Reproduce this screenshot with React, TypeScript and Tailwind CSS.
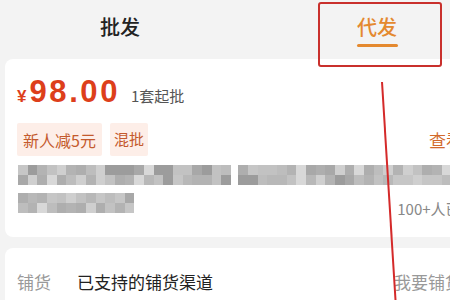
import React from "react";

const palette = [
  "bg-[#9c9c9c]",
  "bg-[#a8a8a8]",
  "bg-[#b3b3b3]",
  "bg-[#bdbdbd]",
  "bg-[#c6c6c6]",
  "bg-[#cfcfcf]",
  "bg-[#d8d8d8]",
  "bg-[#b8b8b8]",
  "bg-[#aeaeae]",
  "bg-[#c2c2c2]",
];

function rand(seed: number) {
  const x = Math.sin(seed * 12.9898 + 78.233) * 43758.5453;
  return x - Math.floor(x);
}

function Mosaic({ blocks, seed }: { blocks: number; seed: number }) {
  return (
    <div className="flex flex-col shrink-0">
      {[0, 1].map((r) => (
        <div key={r} className="flex">
          {Array.from({ length: blocks }).map((_, i) => {
            const v = rand(seed + r * 101 + i * 7);
            const cls = palette[Math.floor(v * palette.length) % palette.length];
            return <div key={i} className={`w-[9.7px] h-[10px] ${cls}`} />;
          })}
        </div>
      ))}
    </div>
  );
}

export default function App() {
  const cjk = { fontFamily: '"Noto Sans CJK SC", "Noto Sans", sans-serif' };
  const latin = { fontFamily: '"Liberation Sans", Arial, sans-serif' };
  return (
    <div className="relative w-[450px] h-[300px] overflow-hidden bg-[#f3f3f3]" style={cjk}>
      {/* Tabs */}
      <div className="flex h-[59px] w-[520px]">
        <div className="w-[240px] flex flex-col items-center pt-[13px]">
          <span className="text-[20px] leading-[28px] font-medium text-[#222]">批发</span>
        </div>
        <div className="w-[274px] flex flex-col items-center pt-[13px]">
          <span className="text-[20px] leading-[28px] font-medium text-[#e4892f]">代发</span>
          <div className="mt-[3px] w-[41px] h-[3px] rounded-full bg-[#e4892f]" />
        </div>
      </div>

      {/* Card 1 */}
      <div className="ml-[5px] w-[520px] h-[178px] bg-white rounded-[8px] pl-[12px]">
        <div className="flex items-baseline pt-[16px] h-[49px]">
          <span className="text-[17px] font-bold text-[#dd3f1b] mr-[3px]" style={latin}>¥</span>
          <span className="text-[31px] leading-[34px] font-bold text-[#dd3f1b] tracking-[2.6px]" style={latin}>
            98.00
          </span>
          <span className="ml-[11px] text-[15px] text-[#555]">1套起批</span>
        </div>
        <div className="flex items-center mt-[15px] h-[33px]">
          <div className="h-[33px] px-[6px] flex items-center bg-[#fdeee8] rounded-[2px] text-[16px] text-[#c45a2d]">新人减5元</div>
          <div className="ml-[8px] h-[33px] px-[4px] flex items-center bg-[#fdeee8] rounded-[2px] text-[15px] text-[#c45a2d]">混批</div>
          <span className="ml-[281px] text-[17px] text-[#d2692c] whitespace-nowrap">查看详情</span>
        </div>
        <div className="flex items-start mt-[9px] pl-[1px]">
          <Mosaic blocks={22} seed={3} />
          <div className="w-[7px]" />
          <Mosaic blocks={24} seed={41} />
        </div>
        <div className="flex items-start mt-[8px] pl-[1px]">
          <Mosaic blocks={12} seed={77} />
          <span className="ml-[263px] mt-[6px] text-[15px] leading-[20px] text-[#888] whitespace-nowrap">100+人已铺货</span>
        </div>
      </div>

      {/* Card 2 */}
      <div className="ml-[5px] mt-[11px] w-[520px] h-[80px] bg-white rounded-[8px] pl-[12px] pt-[20px]">
        <div className="flex items-center text-[17px] leading-[28px] whitespace-nowrap">
          <span className="text-[#999]">铺货</span>
          <span className="ml-[26px] text-[#222]">已支持的铺货渠道</span>
          <span className="ml-[181px] text-[#999]">我要铺货</span>
        </div>
      </div>

      {/* Annotation overlay */}
      <div className="absolute left-[318px] top-[2px] w-[124px] h-[65px] border-2 border-[#c9302c] rounded-[3px]" />
      <svg className="absolute left-0 top-0" width="450" height="300">
        <line x1="382" y1="82" x2="395.5" y2="300" stroke="#d42a2a" strokeWidth="2" />
      </svg>
    </div>
  );
}
